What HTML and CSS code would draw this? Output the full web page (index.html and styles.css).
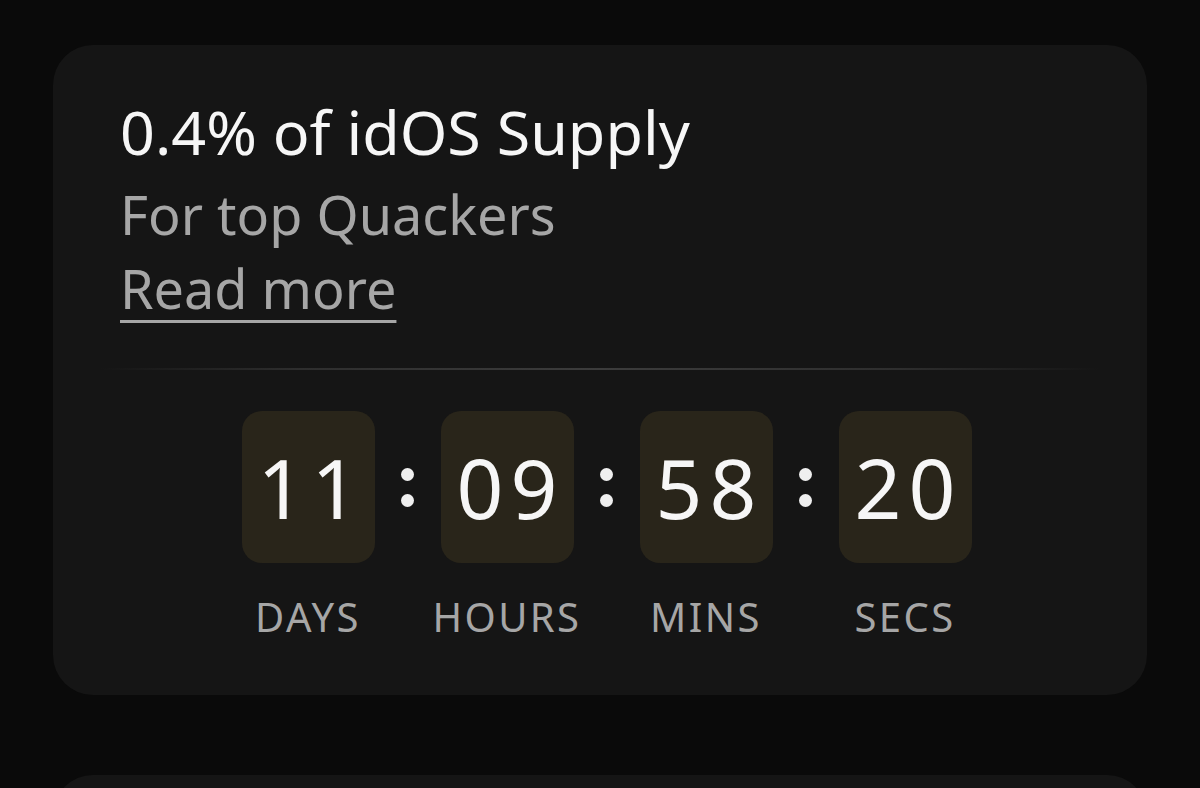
FILE: index.html
```html
<!DOCTYPE html>
<html lang="en">
<head>
<meta charset="utf-8">
<title>idOS Supply</title>
<link rel="stylesheet" href="styles.css">
</head>
<body>
<main class="page">
  <section class="card">
    <h1 class="title">0.4% of idOS Supply</h1>
    <p class="subtitle">For top Quackers</p>
    <a class="more" href="#">Read more</a>
    <div class="divider"></div>
    <div class="countdown">
      <div class="unit">
        <div class="box">11</div>
        <div class="label">DAYS</div>
      </div>
      <div class="colon"><span class="dot"></span><span class="dot"></span></div>
      <div class="unit">
        <div class="box">09</div>
        <div class="label">HOURS</div>
      </div>
      <div class="colon"><span class="dot"></span><span class="dot"></span></div>
      <div class="unit">
        <div class="box">58</div>
        <div class="label">MINS</div>
      </div>
      <div class="colon"><span class="dot"></span><span class="dot"></span></div>
      <div class="unit">
        <div class="box">20</div>
        <div class="label">SECS</div>
      </div>
    </div>
  </section>
  <section class="card card-next"></section>
</main>
</body>
</html>
```
FILE: styles.css
```css
* { box-sizing: border-box; }
html, body {
  margin: 0;
  padding: 0;
  background: #0a0a0a;
  height: 100%;
  overflow: hidden;
}
body {
  font-family: "Noto Sans", "Open Sans", sans-serif;
  color: #f4f4f4;
}
.page {
  padding: 45px 53px 0;
  display: flex;
  flex-direction: column;
  gap: 80px;
}
.card {
  background: #151515;
  border-radius: 40px;
  padding: 44px 67px 54px;
  display: flex;
  flex-direction: column;
  align-items: flex-start;
}
.card-next {
  height: 300px;
}
.title {
  margin: 0;
  font-size: 61px;
  line-height: 85px;
  font-weight: 400;
  color: #f6f6f6;
}
.subtitle {
  margin: 3px 0 0;
  font-size: 54px;
  line-height: 74px;
  color: #a6a6a6;
}
.more {
  font-size: 54px;
  line-height: 74px;
  color: #a6a6a6;
  text-decoration: underline;
  text-decoration-thickness: 3px;
  text-underline-offset: 11px;
}
.divider {
  align-self: stretch;
  height: 2px;
  margin: 43px -20px 0;
  background: linear-gradient(90deg, rgba(70,70,70,0) 0%, #2e2e2e 20%, #3c3c3c 50%, #2e2e2e 80%, rgba(70,70,70,0) 100%);
}
.countdown {
  align-self: stretch;
  display: flex;
  justify-content: center;
  padding-left: 13px;
  margin-top: 41px;
}
.unit {
  width: 133px;
  display: flex;
  flex-direction: column;
  align-items: center;
}
.box {
  width: 133px;
  height: 152px;
  border-radius: 20px;
  background: #29251a;
  display: flex;
  align-items: center;
  justify-content: center;
  font-size: 82px;
  letter-spacing: 7px;
  text-indent: 7px;
  color: #f6f6f6;
  line-height: 1;
}
.label {
  margin-top: 30px;
  font-size: 40px;
  line-height: 48px;
  letter-spacing: 2.4px;
  color: #a6a6a6;
  white-space: nowrap;
}
.colon {
  width: 66px;
  height: 152px;
  display: flex;
  flex-direction: column;
  align-items: center;
  justify-content: center;
  gap: 13px;
}
.dot {
  width: 13px;
  height: 13px;
  border-radius: 50%;
  background: #efefef;
}
```
